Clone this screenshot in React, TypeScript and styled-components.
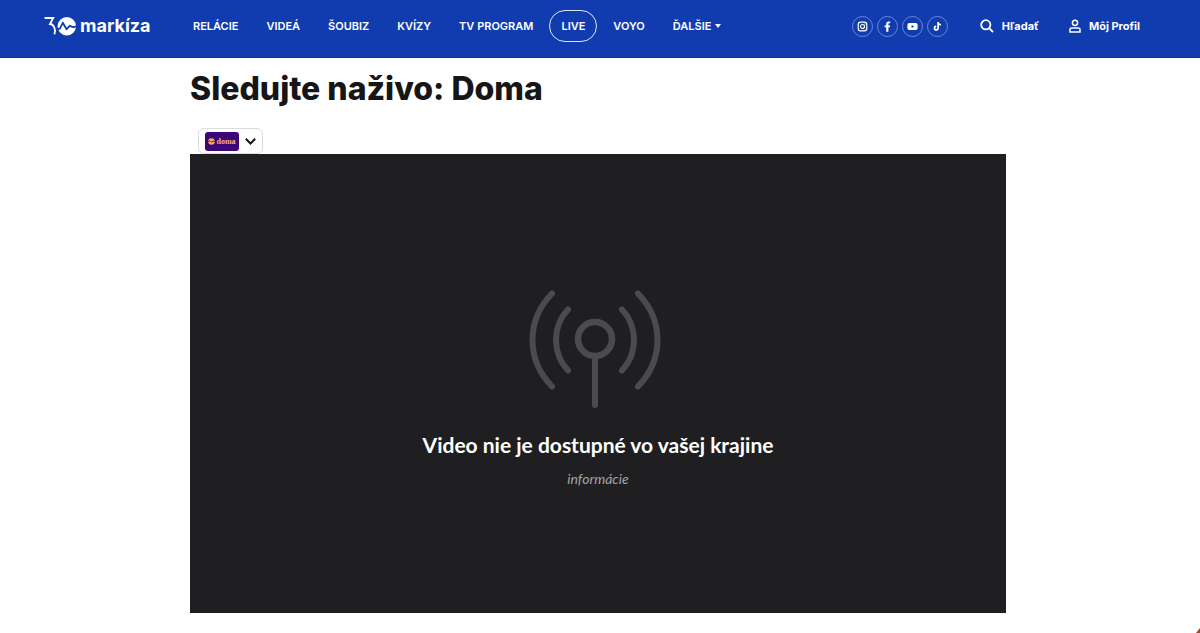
import React from "react";
import styled, { createGlobalStyle } from "styled-components";

const GlobalStyle = createGlobalStyle`
  *, *::before, *::after { box-sizing: border-box; }
  body {
    margin: 0;
    background: #fff;
    color: #161618;
    font-family: Inter, "Liberation Sans", sans-serif;
    overflow-x: hidden;
  }
  a { color: inherit; text-decoration: none; }
  button { font: inherit; color: inherit; background: none; border: 0; padding: 0; cursor: pointer; }
`;

const Header = styled.header`
  display: flex;
  align-items: flex-start;
  height: 58px;
  padding: 10px 60px 0 44px;
  background: #103cb0;
  border-bottom: 1px solid #0c2f94;
  color: #fff;
`;

const Logo = styled.a`
  display: flex;
  align-items: center;
  gap: 3px;
  width: 137px;
  height: 32px;
  font-size: 18px;
  font-weight: 700;
  line-height: 32px;
`;

const Nav = styled.nav`
  display: flex;
  gap: 4px;
`;

const NavLink = styled.a<{ $active?: boolean }>`
  display: flex;
  align-items: center;
  gap: 4px;
  height: 32px;
  padding: 0 11px;
  border: 1px solid ${(p) => (p.$active ? "#dfe6f8" : "transparent")};
  border-radius: 16px;
  font-size: 11px;
  font-weight: 600;
  white-space: nowrap;
`;

const Tools = styled.div`
  display: flex;
  align-items: center;
  height: 32px;
  margin-left: auto;
`;

const Socials = styled.div`
  display: flex;
  gap: 4px;
  margin-right: 32px;
`;

const Social = styled.a`
  display: grid;
  place-items: center;
  width: 21px;
  height: 21px;
  border: 1px solid #6d88d4;
  border-radius: 50%;
`;

const ToolButton = styled.button`
  display: flex;
  align-items: center;
  gap: 8px;
  font-size: 11px;
  font-weight: 700;
  white-space: nowrap;
  & + & { margin-left: 30px; }
`;

const Page = styled.main`
  padding: 12px 4px 20px 0;
`;

const Content = styled.div`
  width: 100%;
  max-width: 816px;
  margin: 0 auto;
`;

const Title = styled.h1`
  margin: 0;
  padding: 1px 0 21px;
  font-size: 32px;
  font-weight: 800;
  line-height: 36px;
`;

const ChannelSelect = styled.button`
  display: flex;
  align-items: center;
  gap: 6px;
  height: 26px;
  margin-left: 8px;
  padding: 0 6px;
  border: 1px solid #dcdcde;
  border-radius: 6px;
  background: #fff;
`;

const Channel = styled.span`
  display: flex;
  align-items: center;
  justify-content: center;
  gap: 1px;
  width: 34px;
  height: 19px;
  border-radius: 3px;
  background: #3d0678;
  color: #f7b27a;
  font: 700 8px "Liberation Serif", serif;
`;

const Player = styled.section`
  display: flex;
  flex-direction: column;
  align-items: center;
  aspect-ratio: 16 / 9;
  padding-top: 134px;
  background: #1f1f21;
  font-family: Lato, sans-serif;
  text-align: center;
`;

const Signal = styled.svg`
  display: block;
  margin: 0 6px 18px 0;
`;

const Message = styled.h2`
  margin: 0;
  color: #fff;
  font-size: 21px;
  font-weight: 700;
  line-height: 34px;
`;

const Info = styled.p`
  margin: 6px 0 0;
  color: #a5a5a7;
  font-size: 14px;
  font-style: italic;
  line-height: 22px;
`;

const Corner = styled.div`
  position: fixed;
  right: 0;
  bottom: 0;
  width: 4px;
  height: 5px;
  background: #a8481c;
  clip-path: polygon(100% 0, 100% 100%, 0 100%);
`;

const links = ["RELÁCIE", "VIDEÁ", "ŠOUBIZ", "KVÍZY", "TV PROGRAM", "LIVE", "VOYO", "ĎALŠIE"];

const socials = [
  {
    name: "Instagram",
    icon: (
      <g fill="none" stroke="#fff" strokeWidth="1.2">
        <rect x="1.2" y="1.2" width="8.6" height="8.6" rx="2.4" />
        <circle cx="5.5" cy="5.5" r="2" />
        <circle cx="8" cy="3" r=".3" strokeWidth=".6" />
      </g>
    ),
  },
  {
    name: "Facebook",
    icon: <path fill="#fff" d="M4.2 10.8V6.3H2.6V4.4h1.6V3.1C4.2 1.4 5.2.4 6.8.4l1.4.1v1.7h-.8c-.8 0-1 .4-1 1v1.2h1.8l-.3 1.9H6.4v4.5z" />,
  },
  {
    name: "YouTube",
    icon: (
      <path
        fill="#fff"
        fillRule="evenodd"
        d="M2.2 2h6.6Q10.6 2 10.6 3.8v3.4Q10.6 9 8.8 9H2.2Q.4 9 .4 7.2V3.8Q.4 2 2.2 2zM4.6 4v3l2.6-1.5z"
      />
    ),
  },
  {
    name: "TikTok",
    icon: (
      <path
        fill="none"
        stroke="#fff"
        strokeWidth="1.7"
        d="M6.1 1v6.1a1.8 1.8 0 1 1-1.9-1.8M6.1 1c.1 1.6 1.2 2.7 2.9 2.8"
      />
    ),
  },
];

export default function App() {
  return (
    <>
      <GlobalStyle />
      <Header>
        <Logo href="#" aria-label="30 markíza">
          <svg width="33" height="20" viewBox="0 0 33 20" aria-hidden="true">
            <path d="M.6 2h8.6L6 8c4 0 6.2 6.4 4.4 10.4" fill="none" stroke="#fff" strokeWidth="1.8" />
            <circle cx="22.8" cy="10.3" r="9.2" fill="#fff" />
            <path
              d="M13.4 13.6l2.6-1.2 2.8-5.6 3.8 6.4 3.2-3.4c2 1.4 3.6 1.8 6.4.6"
              fill="none"
              stroke="#103cb0"
              strokeWidth="1.8"
              strokeLinejoin="round"
            />
          </svg>
          <span>markíza</span>
        </Logo>
        <Nav>
          {links.map((label) => (
            <NavLink key={label} href="#" $active={label === "LIVE"}>
              {label}
              {label === "ĎALŠIE" && (
                <svg width="6" height="4" viewBox="0 0 6 4" aria-hidden="true">
                  <path d="M0 0h6L3 4z" fill="#fff" />
                </svg>
              )}
            </NavLink>
          ))}
        </Nav>
        <Tools>
          <Socials>
            {socials.map(({ name, icon }) => (
              <Social key={name} href="#" aria-label={name}>
                <svg width="11" height="11" viewBox="0 0 11 11">{icon}</svg>
              </Social>
            ))}
          </Socials>
          <ToolButton>
            <svg width="14" height="15" viewBox="0 0 14 15" fill="none" stroke="#fff" strokeWidth="1.8">
              <circle cx="5.8" cy="5.8" r="4.6" />
              <path d="M9.1 9.1l3.9 3.9" />
            </svg>
            Hľadať
          </ToolButton>
          <ToolButton>
            <svg width="12" height="14" viewBox="0 0 12 14" fill="none" stroke="#fff" strokeWidth="1.5">
              <circle cx="6" cy="3.8" r="2.6" />
              <path d="M1 13V10.6Q1 8.9 2.8 8.9h6.4Q11 8.9 11 10.6V13z" />
            </svg>
            Môj Profil
          </ToolButton>
        </Tools>
      </Header>
      <Page>
        <Content>
          <Title>Sledujte naživo: Doma</Title>
          <ChannelSelect aria-label="Vybrať kanál" aria-haspopup="listbox">
            <Channel>
              <svg width="7" height="7" viewBox="0 0 7 7" aria-hidden="true">
                <circle cx="3.5" cy="3.5" r="3.3" fill="#f7a66c" />
                <path d="M0 4l1.8-1.4 1.6 1.6L5 3l2 .6" fill="none" stroke="#3d0678" strokeWidth=".8" />
              </svg>
              doma
            </Channel>
            <svg width="11" height="7" viewBox="0 0 11 7" fill="none" stroke="#161618" strokeWidth="2" aria-hidden="true">
              <path d="M.8.8l4.7 4.7L10.2.8" />
            </svg>
          </ChannelSelect>
          <Player>
            <Signal width="134" height="122" viewBox="0 0 134 122" fill="none" stroke="#4b4b4d" strokeWidth="6" strokeLinecap="round" aria-hidden="true">
              <circle cx="67" cy="51" r="17" strokeWidth="6.5" />
              <path d="M67 70v47" />
              <path d="M24 5.5c-26 27-26 66 0 93M110 5.5c26 27 26 66 0 93" />
              <path d="M40 21.5c-16 17-16 44 0 61M94 21.5c16 17 16 44 0 61" />
            </Signal>
            <Message>Video nie je dostupné vo vašej krajine</Message>
            <Info>informácie</Info>
          </Player>
        </Content>
      </Page>
      <Corner />
    </>
  );
}
